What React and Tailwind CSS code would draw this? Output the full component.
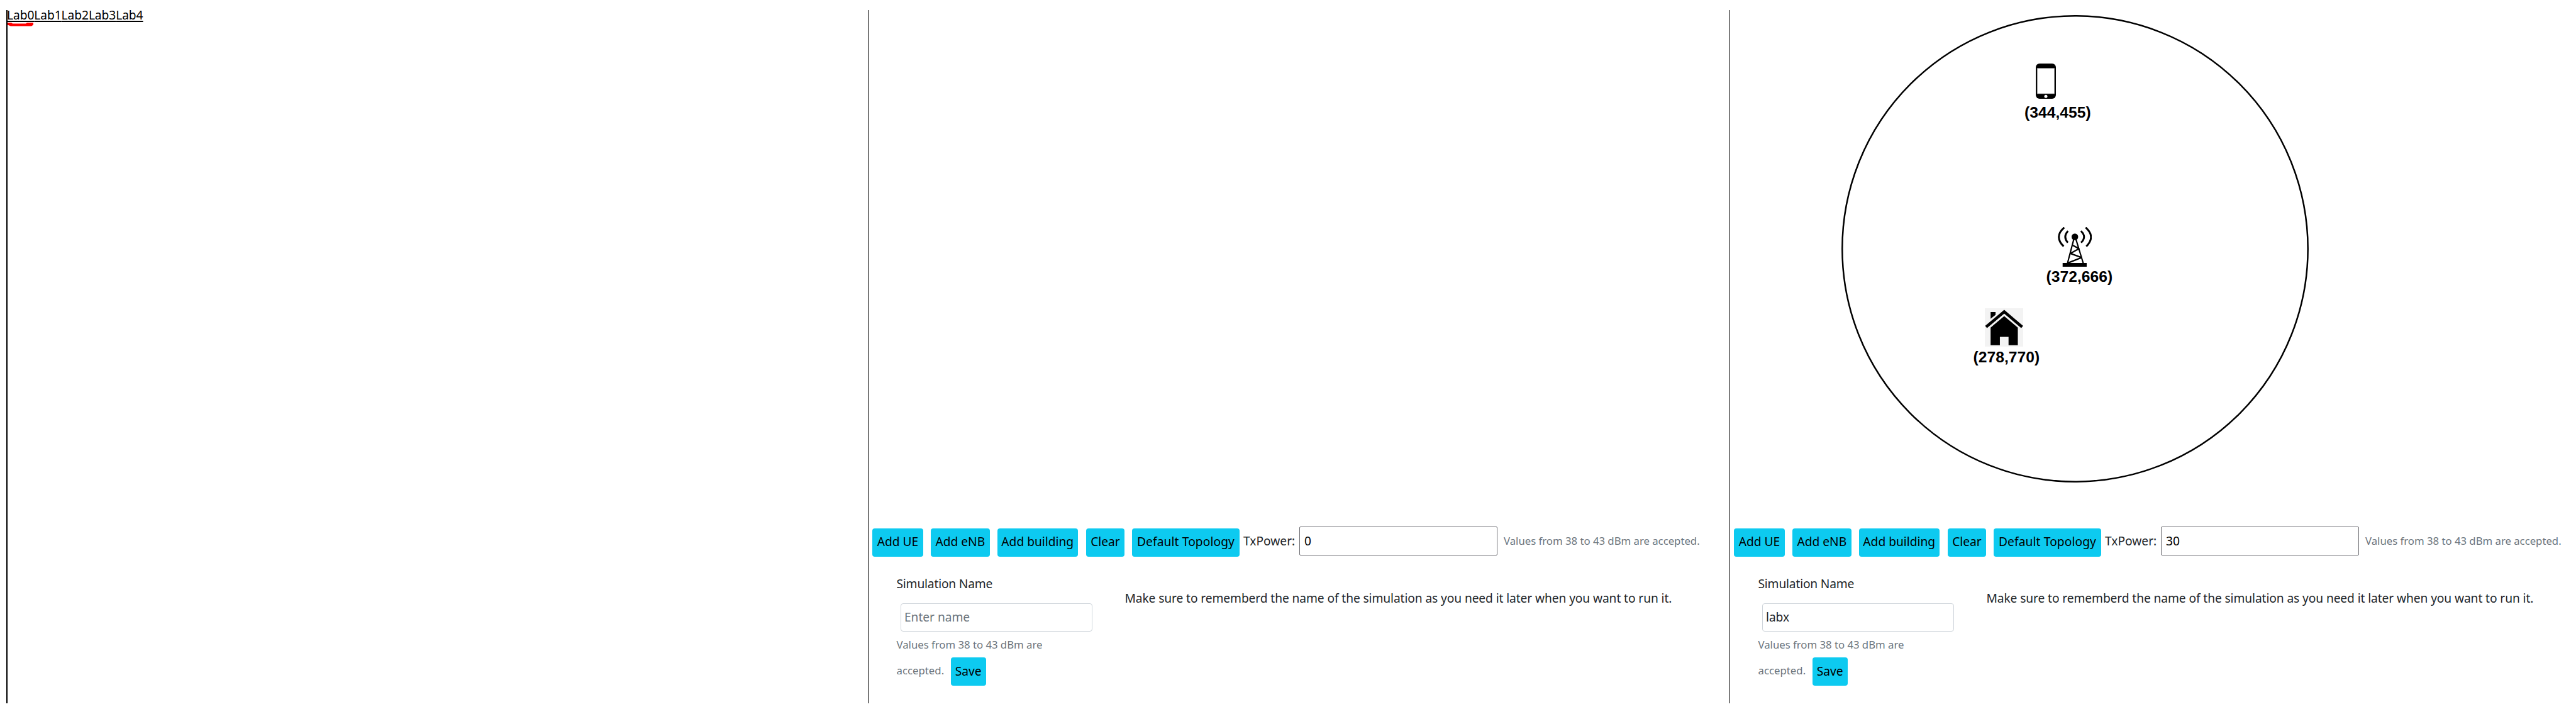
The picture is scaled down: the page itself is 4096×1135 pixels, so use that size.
import React from "react";

function Btn({ children, className }) {
  return (
    <button
      className={`h-[44.5px] shrink-0 rounded-[4px] bg-[#0dcaf0] text-center whitespace-nowrap text-black ${className}`}
    >
      {children}
    </button>
  );
}

function Toolbar({ power }) {
  return (
    <div className="flex h-12 items-start">
      <Btn className="mt-[3px] ml-[6px] w-[81px] pb-px">Add UE</Btn>
      <Btn className="mt-[3px] ml-3 w-[93.5px] pb-px">Add eNB</Btn>
      <Btn className="mt-[3px] ml-3 w-[128.5px] pb-px">Add building</Btn>
      <Btn className="mt-[3px] ml-[13px] w-[61px] pb-px">Clear</Btn>
      <Btn className="mt-[3px] ml-3 w-[171px] pb-px tracking-[0.1px]">Default Topology</Btn>
      <span className="ml-[6px] w-[88.5px] shrink-0 leading-[45px]">TxPower:</span>
      <input
        className="h-[46px] w-[315.5px] shrink-0 rounded-[2px] border border-[#6b6b70] pb-px pl-[7.5px] text-black tracking-[-0.1px] outline-none"
        defaultValue={power}
      />
      <span className="ml-[10px] text-[16.8px] leading-[46px] tracking-[-0.03px] whitespace-nowrap text-[#6c757d]">
        Values from 38 to 43 dBm are accepted.
      </span>
    </div>
  );
}

function SimulationForm({ name }) {
  return (
    <div className="flex pl-[44.5px]">
      <div className="mt-7 w-[363px] shrink-0">
        <label className="block leading-[30px] tracking-[-0.18px]">Simulation Name</label>
        <input
          className="mt-4 ml-[6.5px] block h-[45px] w-[305px] rounded-[4px] border border-[#ced4da] pb-[2px] pl-[5px] tracking-[-0.05px] outline-none placeholder:text-[#6c757d]"
          placeholder="Enter name"
          defaultValue={name}
        />
        <div className="mt-[6px] text-[16.8px] leading-[30px] tracking-[-0.03px] text-[#6c757d]">
          Values from 38 to 43 dBm are
        </div>
        <div className="mt-[5px] flex">
          <span className="w-[86px] text-[16.8px] leading-[42px] text-[#6c757d]">accepted.</span>
          <Btn className="w-[56.5px]">Save</Btn>
        </div>
      </div>
      <p className="mt-[51px] leading-[30px] tracking-[-0.1px] whitespace-nowrap">
        Make sure to rememberd the name of the simulation as you need it later when you want to run it.
      </p>
    </div>
  );
}

function PhoneIcon() {
  return (
    <svg className="block h-[56px] w-[32px]" viewBox="0 0 32 56">
      <rect width="32" height="56" rx="6" fill="#000" />
      <rect x="2.2" y="7.5" width="27.6" height="40.5" fill="#fff" stroke="#777" strokeWidth=".6" />
      <circle cx="16" cy="52.2" r="2.5" fill="#fff" />
    </svg>
  );
}

function TowerIcon() {
  return (
    <svg className="block h-[63px] w-[54px]" viewBox="0 0 163 191" fill="none" stroke="#000">
      <path d="M31 2Q-20 46 28 93M49 19Q23 46 48 75M134 2Q184 46 137 93M111 19Q141 46 112 75" strokeWidth="9" />
      <circle cx="82" cy="47" r="16" fill="#000" stroke="none" />
      <path d="M77 58L46 176M87 58L123 176" strokeWidth="6.5" />
      <path d="M72 88L102 104L60 127L115 147L48 173" strokeWidth="7" strokeLinejoin="bevel" />
      <path d="M23 173H139V191H23Z" fill="#000" stroke="none" />
    </svg>
  );
}

function HouseIcon() {
  return (
    <svg className="block h-[61px] w-[61px]" viewBox="0 0 186 186">
      <rect width="186" height="186" fill="#f3f3f3" />
      <path d="M28 18H52V32L28 51Z" fill="#000" />
      <path d="M6 91L94 17L181 91" fill="none" stroke="#000" strokeWidth="14" />
      <path d="M94 38L160 94V179H115V139H73V179H28V94Z" fill="#000" />
    </svg>
  );
}

const nodes = [
  { label: "(344,455)", Icon: PhoneIcon, icon: "left-[486px] top-[84.5px]", text: "left-[468px] top-[149px]" },
  { label: "(372,666)", Icon: TowerIcon, icon: "left-[521px] top-[345px]", text: "left-[502.5px] top-[409.5px]" },
  { label: "(278,770)", Icon: HouseIcon, icon: "left-[405px] top-[473.5px]", text: "left-[386.5px] top-[538px]" },
];

function Topology() {
  return (
    <div className="relative h-[821px]">
      <svg className="absolute top-[8.3px] left-[177px] size-[743px]" viewBox="0 0 743 743">
        <circle cx="371.5" cy="371.5" r="370.2" fill="none" stroke="#000" strokeWidth="2.5" />
      </svg>
      {nodes.map(({ label, Icon, icon, text }) => (
        <React.Fragment key={label}>
          <div className={`absolute ${icon}`}>
            <Icon />
          </div>
          <span
            className={`absolute font-['Liberation_Sans',Arial,sans-serif] text-[24.68px] leading-[28px] font-bold text-black ${text}`}
          >
            {label}
          </span>
        </React.Fragment>
      ))}
    </div>
  );
}

export default function App() {
  return (
    <div className="flex h-[1135px] w-[4096px] overflow-hidden bg-white pt-4 pl-[10px] font-['Noto_Sans',sans-serif] text-[19.2px] text-[#212529]">
      <section className="relative h-[1102px] w-[1370px] shrink-0 border-l-2 border-black">
        <svg className="absolute top-[19.5px] left-0 h-[6px] w-[41px]" viewBox="0 0 41 6">
          <path d="M0 0H6L8 1.5H29L31 0H41V3.5L38 5.5H5L0 3.5Z" fill="#f00" />
        </svg>
        <nav className="relative -mt-1 -ml-px flex text-black">
          {["Lab0", "Lab1", "Lab2", "Lab3", "Lab4"].map((lab) => (
            <a
              key={lab}
              className="w-[43.3px] leading-6 tracking-[-0.07px] underline decoration-2 underline-offset-[1.5px]"
            >
              {lab}
            </a>
          ))}
        </nav>
      </section>
      <section className="h-[1102px] w-[1370px] shrink-0 border-l border-black">
        <div className="h-[821px]" />
        <Toolbar power="0" />
        <SimulationForm name="" />
      </section>
      <section className="h-[1102px] w-[1346px] shrink-0 border-l border-black">
        <Topology />
        <Toolbar power="30" />
        <SimulationForm name="labx" />
      </section>
    </div>
  );
}
